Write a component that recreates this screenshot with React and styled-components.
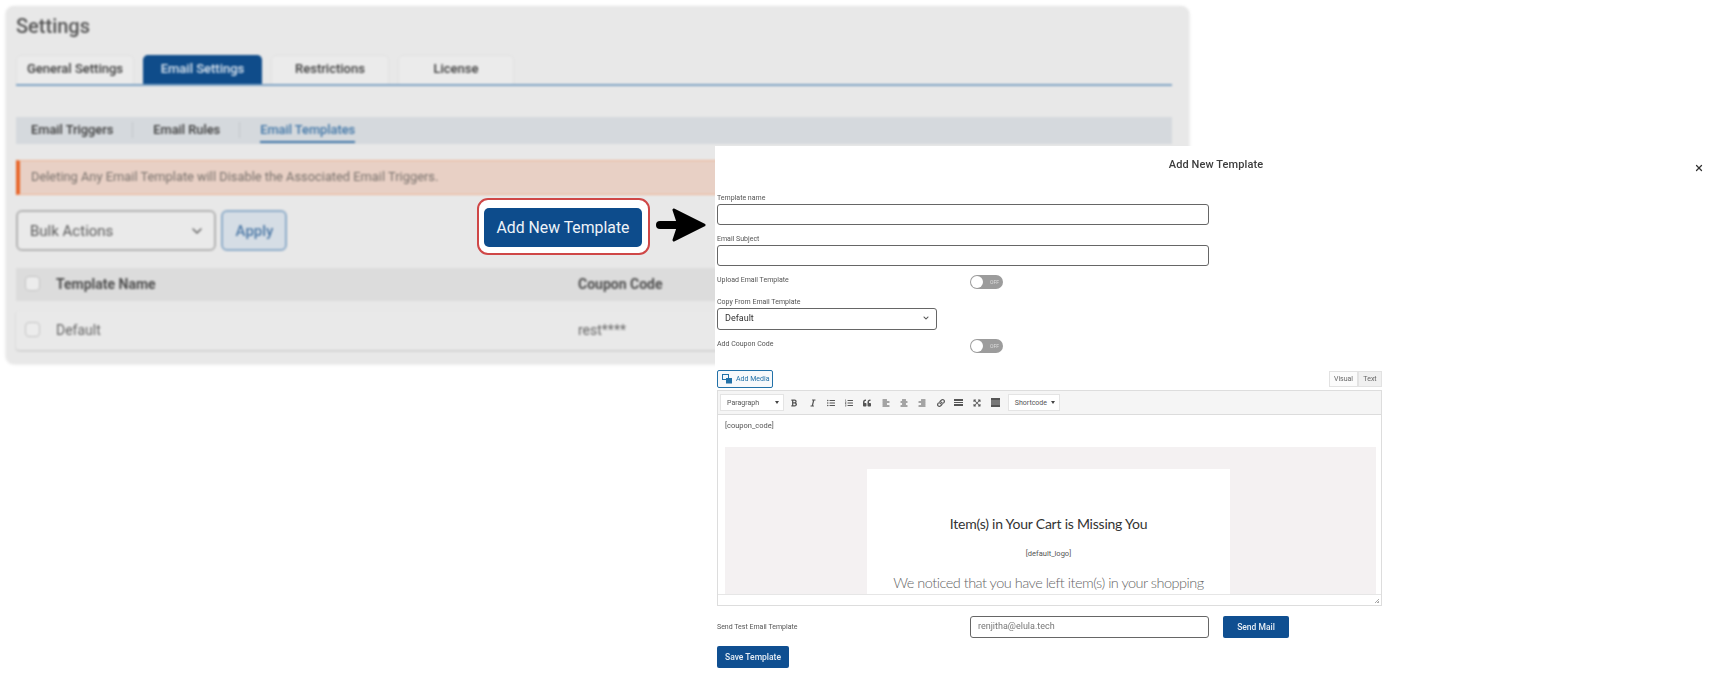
import React from "react";
import styled, { createGlobalStyle } from "styled-components";
import {
  FaBold,
  FaItalic,
  FaListUl,
  FaListOl,
  FaQuoteLeft,
  FaAlignLeft,
  FaAlignCenter,
  FaAlignRight,
  FaLink,
  FaExpandArrowsAlt,
  FaChevronDown,
} from "react-icons/fa";
import { LuChevronDown, LuX } from "react-icons/lu";

const GlobalStyle = createGlobalStyle`
  html, body {
    margin: 0;
    height: 100%;
    background: #fff;
    overflow: hidden;
  }
  body {
    font-family: Roboto, "Liberation Sans", sans-serif;
  }
  * {
    box-sizing: border-box;
  }
`;

const Page = styled.div`
  position: relative;
  width: 1727px;
  height: 698px;
  padding: 6px;
  background: #fff;
`;

/* background screen, photographed out of focus */
const Panel = styled.section`
  width: 1183px;
  height: 357px;
  padding: 7px 17px 13px 10px;
  background: #e8e8e8;
  border-radius: 8px;
  box-shadow: 0 1px 3px rgba(0, 0, 0, 0.14);
  filter: blur(0.9px);
`;

const PageTitle = styled.h1`
  margin: 0;
  font-size: 20px;
  line-height: 26px;
  font-weight: 500;
  color: #555;
`;

const Tabs = styled.div`
  display: flex;
  gap: 9px;
  height: 31px;
  margin-top: 16px;
  border-bottom: 2px solid #7fa3c4;
`;

const Tab = styled.div`
  width: ${(props) => props.$width}px;
  height: 29px;
  display: flex;
  align-items: center;
  justify-content: center;
  padding-bottom: 4px;
  font-size: 13px;
  font-weight: 500;
  border-radius: 5px 5px 0 0;
  color: ${(props) => (props.$active ? "#dce6f0" : "#3d3d3d")};
  background: ${(props) => (props.$active ? "#0f4c8a" : "#ebebeb")};
  border: 1px solid ${(props) => (props.$active ? "#0f4c8a" : "#e1e1e1")};
  border-bottom: none;
`;

const SubNav = styled.nav`
  display: flex;
  align-items: stretch;
  height: 27px;
  margin-top: 31px;
  padding-left: 15px;
  background: #d5d9dd;
`;

const SubItem = styled.div`
  display: flex;
  align-items: center;
  height: 26px;
  font-size: 12.8px;
  font-weight: 500;
  color: ${(props) => (props.$active ? "#3e74a6" : "#3b3b3b")};
  border-bottom: 2px solid ${(props) => (props.$active ? "#3e74a6" : "transparent")};
`;

const SubDivider = styled.span`
  width: 1px;
  height: 16px;
  margin: 5px 20px 0 19px;
  background: #c2c6ca;
`;

const Notice = styled.div`
  display: flex;
  align-items: center;
  height: 35px;
  margin-top: 16px;
  padding: 0 0 2px 11px;
  font-size: 12.85px;
  color: #77706b;
  background: #e8d0c5;
  border-left: 4px solid #e8662a;
  border-top: 1px solid #eeb596;
  border-bottom: 1px solid #eeb596;
`;

const Toolbar = styled.div`
  display: flex;
  gap: 5px;
  height: 41px;
  margin-top: 15px;
`;

const BulkSelect = styled.div`
  display: flex;
  align-items: center;
  justify-content: space-between;
  width: 200px;
  padding: 0 9px 0 12px;
  font-size: 15px;
  color: #5b5b5b;
  background: #eaeaea;
  border: 2px solid #b3b3b3;
  border-radius: 6px;
`;

const ApplyButton = styled.div`
  display: flex;
  align-items: center;
  justify-content: center;
  width: 66px;
  padding-left: 1px;
  font-size: 15px;
  font-weight: 500;
  color: #4d79a6;
  background: #d5dde5;
  border: 2px solid #8fadc9;
  border-radius: 6px;
`;

const TableHead = styled.div`
  display: grid;
  grid-template-columns: 31px 522px 1fr;
  align-items: center;
  height: 33px;
  margin-top: 17px;
  padding: 0 0 2px 9px;
  font-size: 14px;
  font-weight: 700;
  color: #4d4d4d;
  background: #dcdcdc;
`;

const TableRow = styled(TableHead)`
  height: 39px;
  margin-top: 10px;
  font-weight: 400;
  color: #666;
  background: #e9e9e9;
  border-radius: 3px;
  box-shadow: 0 1px 2px rgba(0, 0, 0, 0.16);
`;

const Check = styled.span`
  width: 15px;
  height: 15px;
  background: #ececec;
  border: 1.5px solid #c4c4c4;
  border-radius: 4px;
`;

/* red annotation drawn over the screenshot */
const Callout = styled.div`
  position: absolute;
  left: 477px;
  top: 198px;
  width: 173px;
  height: 57px;
  display: flex;
  align-items: center;
  justify-content: center;
  background: #fff;
  border: 2px solid #cf4747;
  border-radius: 11px;
`;

const CalloutButton = styled.div`
  display: flex;
  align-items: center;
  justify-content: center;
  width: 158px;
  height: 39px;
  margin: 1px 1px 0 0;
  font-size: 15.8px;
  color: #eef3f8;
  background: #0d4c8c;
  border-radius: 5px;
`;

const ArrowMark = styled.svg`
  position: absolute;
  left: 656px;
  top: 207px;
  width: 50px;
  height: 36px;
`;

const Modal = styled.aside`
  position: absolute;
  left: 715px;
  top: 146px;
  right: 0;
  bottom: 0;
  padding-left: 2px;
  background: #fff;
`;

const ModalBody = styled.div`
  width: 665px;
  display: flex;
  flex-direction: column;
  filter: blur(0.6px);
`;

const ModalHeader = styled.header`
  height: 36px;
  display: flex;
  align-items: center;
  justify-content: center;
  margin-left: 0;
  width: 998px;
  font-size: 11px;
  font-weight: 500;
  letter-spacing: 0.1px;
  color: #3c3c3c;
`;

const CloseButton = styled.span`
  position: absolute;
  left: 977px;
  top: 12px;
  width: 12px;
  height: 12px;
  color: #333;
`;

const Field = styled.div`
  display: flex;
  flex-direction: column;
  margin-top: ${(props) => props.$top}px;
`;

const Label = styled.label`
  height: 12px;
  font-size: 7px;
  line-height: 12px;
  color: #555;
`;

const RowLabel = styled(Label)`
  margin-top: ${(props) => props.$shift ?? -5}px;
`;

const TextBox = styled.div`
  width: ${(props) => props.$width}px;
  height: ${(props) => props.$height ?? 21}px;
  display: flex;
  align-items: center;
  justify-content: space-between;
  padding: 0 7px 2px;
  font-size: 9px;
  color: ${(props) => props.$color ?? "#333"};
  background: #fff;
  border: 1px solid #666;
  border-radius: 3px;
`;

const SplitRow = styled.div`
  display: grid;
  grid-template-columns: 253px auto;
  justify-content: start;
  align-items: center;
  margin-top: ${(props) => props.$top}px;
`;

const Toggle = styled.div`
  position: relative;
  width: 33px;
  height: 14px;
  padding-right: 4px;
  font-size: 5px;
  line-height: 14px;
  text-align: right;
  color: #ddd;
  background: #9c9c9c;
  border-radius: 7px;
  &::before {
    content: "";
    position: absolute;
    left: 1px;
    top: 1px;
    width: 12px;
    height: 12px;
    border-radius: 50%;
    background: #fff;
  }
`;

const MediaRow = styled.div`
  display: flex;
  justify-content: space-between;
  align-items: center;
  height: 18px;
  margin-top: 17px;
`;

const MediaButton = styled.div`
  display: flex;
  align-items: center;
  gap: 3px;
  width: 56px;
  height: 18px;
  padding-left: 4px;
  font-size: 7px;
  color: #2271a8;
  background: #f7f9fb;
  border: 1px solid #2271a8;
  border-radius: 2px;
`;

const ModeTabs = styled.div`
  display: flex;
  height: 16px;
`;

const ModeTab = styled.div`
  display: flex;
  align-items: center;
  justify-content: center;
  width: ${(props) => props.$width}px;
  font-size: 7px;
  color: #666;
  background: ${(props) => (props.$active ? "#f0f0f0" : "#fbfbfb")};
  border: 1px solid #e2e2e2;
`;

const Editor = styled.div`
  height: 216px;
  margin-top: 2px;
  display: flex;
  flex-direction: column;
  border: 1px solid #dddddd;
`;

const EditorBar = styled.div`
  display: flex;
  align-items: center;
  gap: 6.3px;
  height: 24px;
  flex: none;
  padding-left: 2px;
  background: #f5f5f5;
  border-bottom: 1px solid #dcdcdc;
`;

const DropButton = styled.div`
  display: flex;
  align-items: center;
  justify-content: space-between;
  width: ${(props) => props.$width}px;
  height: 17px;
  padding: 0 4px 0 6px;
  font-size: 7px;
  color: #555;
  background: #fff;
  border: 1px solid #e4e4e4;
`;

const FormatDrop = styled(DropButton)`
  margin-right: -2px;
`;

const Caret = styled.span`
  width: 0;
  height: 0;
  border-left: 2px solid transparent;
  border-right: 2px solid transparent;
  border-top: 3px solid #444;
`;

const ToolIcon = styled.span`
  display: flex;
  align-items: center;
  justify-content: center;
  width: 12px;
  color: #555;
  font-size: 8px;
`;

const RuleIcon = styled.span`
  width: 9px;
  height: 7px;
  border-top: 2px solid #555;
  border-bottom: 2px solid #555;
  background: linear-gradient(#555, #555) center / 100% 1px no-repeat;
`;

const SinkIcon = styled(RuleIcon)`
  height: 9px;
  background: #777;
`;

const EditorContent = styled.div`
  flex: 1;
  min-height: 0;
  padding: 4px 5px 0 7px;
  overflow: hidden;
`;

const ShortCode = styled.p`
  margin: 0;
  height: 28px;
  font-size: 7.5px;
  line-height: 14px;
  color: #555;
`;

const EmailCanvas = styled.div`
  height: 148px;
  padding: 22px 0 0 142px;
  overflow: hidden;
  background: #f4f1f2;
`;

const EmailCard = styled.div`
  width: 363px;
  height: 200px;
  padding-top: 45px;
  text-align: center;
  background: #fff;
`;

const EmailHeading = styled.h2`
  margin: 0;
  font-family: Lato, "Noto Sans", sans-serif;
  font-size: 14px;
  letter-spacing: -0.23px;
  line-height: 20px;
  font-weight: 400;
  color: #333;
`;

const EmailLogo = styled.p`
  margin: 15px 0 0;
  font-size: 7.5px;
  line-height: 10px;
  color: #555;
`;

const EmailText = styled.p`
  margin: 14px 0 0;
  font-family: Lato, "Noto Sans", sans-serif;
  font-size: 14.5px;
  letter-spacing: -0.5px;
  line-height: 20px;
  font-weight: 300;
  white-space: nowrap;
  color: #666;
`;

const ResizeGrip = styled.div`
  flex: none;
  height: 11px;
  position: relative;
  border-top: 1px solid #e6e6e6;
  &::after {
    content: "";
    position: absolute;
    right: 2px;
    bottom: 2px;
    width: 5px;
    height: 5px;
    background: linear-gradient(135deg, transparent 50%, #aaa 50%, #aaa 65%, transparent 65%, transparent 78%, #aaa 78%);
  }
`;

const PrimaryButton = styled.div`
  display: flex;
  align-items: center;
  justify-content: center;
  width: ${(props) => props.$width}px;
  height: ${(props) => props.$height}px;
  padding-bottom: 1px;
  font-size: 8.5px;
  font-weight: 500;
  color: #e6edf5;
  background: #0f4f91;
  border-radius: 2px;
`;

const MailControls = styled.div`
  display: flex;
  gap: 14px;
`;

const SaveWrap = styled.div`
  margin-top: 8px;
`;

const tabs = [
  { name: "General Settings", width: 118 },
  { name: "Email Settings", width: 119, active: true },
  { name: "Restrictions", width: 118 },
  { name: "License", width: 116 },
];

const toolIcons = [FaBold, FaItalic, FaListUl, FaListOl, FaQuoteLeft, FaAlignLeft, FaAlignCenter, FaAlignRight, FaLink];

export default function App() {
  return (
    <>
      <GlobalStyle />
      <Page>
        <Panel>
          <PageTitle>Settings</PageTitle>
          <Tabs>
            {tabs.map((tab) => (
              <Tab key={tab.name} $width={tab.width} $active={tab.active}>
                {tab.name}
              </Tab>
            ))}
          </Tabs>
          <SubNav>
            <SubItem>Email Triggers</SubItem>
            <SubDivider />
            <SubItem>Email Rules</SubItem>
            <SubDivider />
            <SubItem $active>Email Templates</SubItem>
          </SubNav>
          <Notice>Deleting Any Email Template will Disable the Associated Email Triggers.</Notice>
          <Toolbar>
            <BulkSelect>
              Bulk Actions
              <LuChevronDown size={16} />
            </BulkSelect>
            <ApplyButton>Apply</ApplyButton>
          </Toolbar>
          <TableHead>
            <Check />
            <span>Template Name</span>
            <span>Coupon Code</span>
          </TableHead>
          <TableRow>
            <Check />
            <span>Default</span>
            <span>rest****</span>
          </TableRow>
        </Panel>

        <Callout>
          <CalloutButton>Add New Template</CalloutButton>
        </Callout>
        <ArrowMark viewBox="0 0 50 36">
          <path d="M4 18H26" stroke="#000" strokeWidth="8" strokeLinecap="round" />
          <path d="M18 3L48 18L18 33L23 18Z" fill="#000" stroke="#000" strokeWidth="3" strokeLinejoin="round" />
        </ArrowMark>

        <Modal>
          <ModalBody>
            <ModalHeader>Add New Template</ModalHeader>
            <CloseButton>
              <LuX size={10} strokeWidth={3} />
            </CloseButton>
            <Field $top={10}>
              <Label>Template name</Label>
              <TextBox $width={492} />
            </Field>
            <Field $top={8}>
              <Label>Email Subject</Label>
              <TextBox $width={492} />
            </Field>
            <SplitRow $top={9}>
              <RowLabel>Upload Email Template</RowLabel>
              <Toggle>OFF</Toggle>
            </SplitRow>
            <Field $top={7}>
              <Label>Copy From Email Template</Label>
              <TextBox $width={220} $height={22}>
                Default
                <FaChevronDown size={6} color="#555" />
              </TextBox>
            </Field>
            <SplitRow $top={9}>
              <RowLabel>Add Coupon Code</RowLabel>
              <Toggle>OFF</Toggle>
            </SplitRow>
            <MediaRow>
              <MediaButton>
                <svg width="11" height="10" viewBox="0 0 11 10">
                  <rect x="0.5" y="0.5" width="6" height="5" fill="none" stroke="#2271a8" />
                  <rect x="4" y="4" width="6" height="5.5" fill="#2271a8" />
                </svg>
                Add Media
              </MediaButton>
              <ModeTabs>
                <ModeTab $width={29}>Visual</ModeTab>
                <ModeTab $width={24} $active>
                  Text
                </ModeTab>
              </ModeTabs>
            </MediaRow>
            <Editor>
              <EditorBar>
                <FormatDrop $width={64}>
                  Paragraph
                  <Caret />
                </FormatDrop>
                {toolIcons.map((Icon, i) => (
                  <ToolIcon key={i}>
                    <Icon />
                  </ToolIcon>
                ))}
                <ToolIcon>
                  <RuleIcon />
                </ToolIcon>
                <ToolIcon>
                  <FaExpandArrowsAlt />
                </ToolIcon>
                <ToolIcon>
                  <SinkIcon />
                </ToolIcon>
                <DropButton $width={52}>
                  Shortcode
                  <Caret />
                </DropButton>
              </EditorBar>
              <EditorContent>
                <ShortCode>[coupon_code]</ShortCode>
                <EmailCanvas>
                  <EmailCard>
                    <EmailHeading>Item(s) in Your Cart is Missing You</EmailHeading>
                    <EmailLogo>[default_logo]</EmailLogo>
                    <EmailText>We noticed that you have left item(s) in your shopping</EmailText>
                  </EmailCard>
                </EmailCanvas>
              </EditorContent>
              <ResizeGrip />
            </Editor>
            <SplitRow $top={10}>
              <RowLabel $shift={0}>Send Test Email Template</RowLabel>
              <MailControls>
                <TextBox $width={239} $height={22} $color="#777">
                  renjitha@elula.tech
                </TextBox>
                <PrimaryButton $width={66} $height={22}>
                  Send Mail
                </PrimaryButton>
              </MailControls>
            </SplitRow>
            <SaveWrap>
              <PrimaryButton $width={72} $height={22}>
                Save Template
              </PrimaryButton>
            </SaveWrap>
          </ModalBody>
        </Modal>
      </Page>
    </>
  );
}
